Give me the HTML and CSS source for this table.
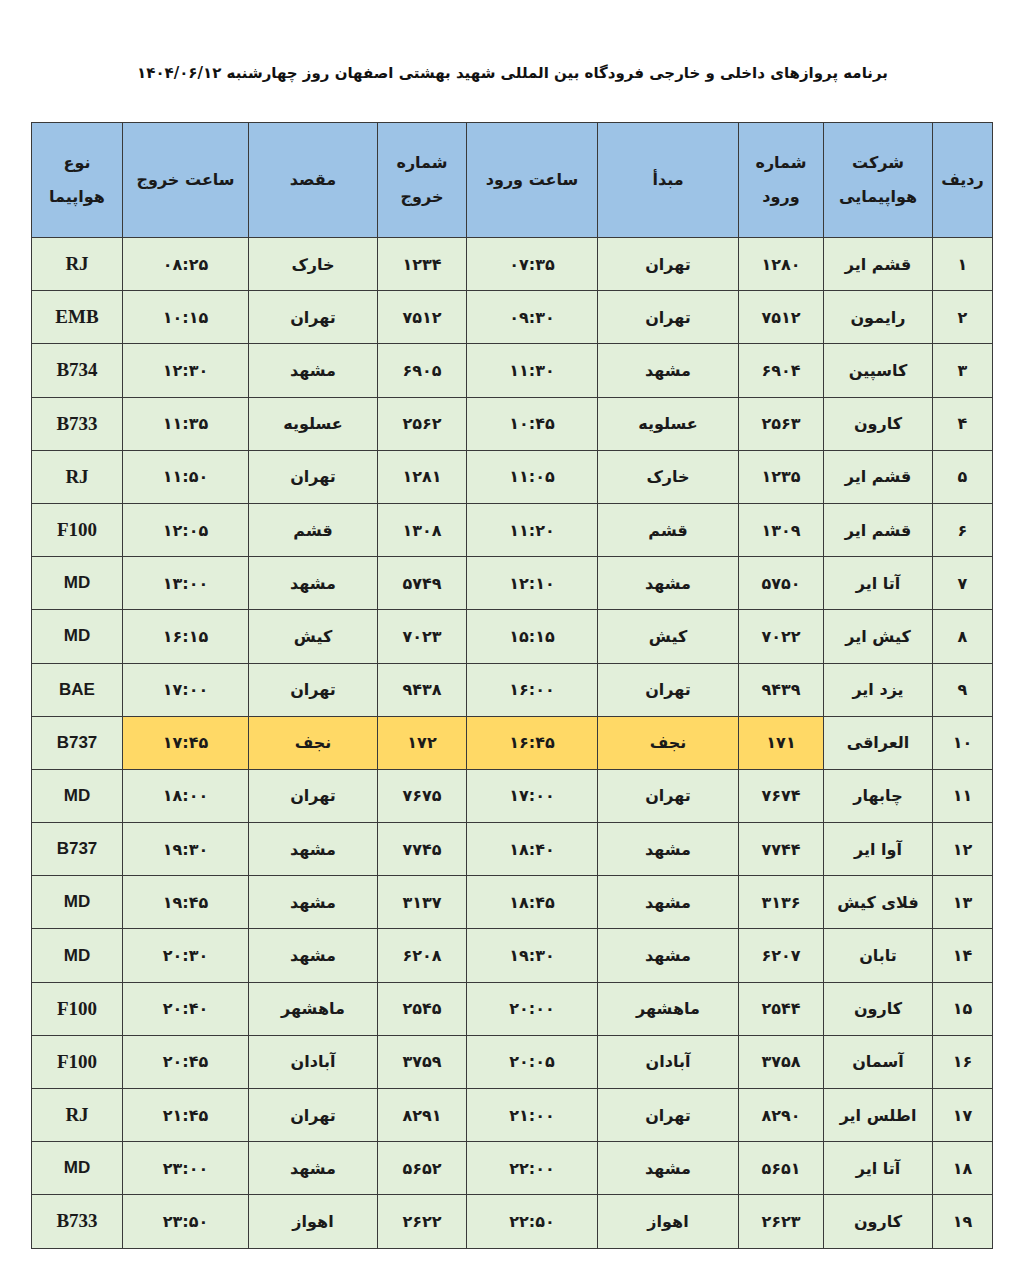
FILE: index.html
```html
<!DOCTYPE html>
<html lang="fa" dir="rtl">
<head>
<meta charset="utf-8">
<title>برنامه پروازها</title>
<link rel="stylesheet" href="styles.css">
</head>
<body>
<div class="page">
  <h1 class="title">برنامه پروازهای داخلی و خارجی فرودگاه بین المللی شهید بهشتی اصفهان روز چهارشنبه ۱۴۰۴/۰۶/۱۲</h1>
  <table class="flights">
    <colgroup>
      <col class="c-row"><col class="c-air"><col class="c-inno"><col class="c-from"><col class="c-intime"><col class="c-outno"><col class="c-to"><col class="c-outtime"><col class="c-type">
    </colgroup>
    <thead>
      <tr>
        <th>ردیف</th>
        <th>شرکت<br>هواپیمایی</th>
        <th>شماره<br>ورود</th>
        <th>مبدأ</th>
        <th>ساعت ورود</th>
        <th>شماره<br>خروج</th>
        <th>مقصد</th>
        <th>ساعت خروج</th>
        <th>نوع<br>هواپیما</th>
      </tr>
    </thead>
    <tbody>
      <tr><td>۱</td><td>قشم ایر</td><td>۱۲۸۰</td><td>تهران</td><td>۰۷:۳۵</td><td>۱۲۳۴</td><td>خارک</td><td>۰۸:۲۵</td><td class="t-serif">RJ</td></tr>
      <tr><td>۲</td><td>رایمون</td><td>۷۵۱۲</td><td>تهران</td><td>۰۹:۳۰</td><td>۷۵۱۲</td><td>تهران</td><td>۱۰:۱۵</td><td class="t-serif">EMB</td></tr>
      <tr><td>۳</td><td>کاسپین</td><td>۶۹۰۴</td><td>مشهد</td><td>۱۱:۳۰</td><td>۶۹۰۵</td><td>مشهد</td><td>۱۲:۳۰</td><td class="t-serif">B734</td></tr>
      <tr><td>۴</td><td>کارون</td><td>۲۵۶۳</td><td>عسلویه</td><td>۱۰:۴۵</td><td>۲۵۶۲</td><td>عسلویه</td><td>۱۱:۳۵</td><td class="t-serif">B733</td></tr>
      <tr><td>۵</td><td>قشم ایر</td><td>۱۲۳۵</td><td>خارک</td><td>۱۱:۰۵</td><td>۱۲۸۱</td><td>تهران</td><td>۱۱:۵۰</td><td class="t-serif">RJ</td></tr>
      <tr><td>۶</td><td>قشم ایر</td><td>۱۳۰۹</td><td>قشم</td><td>۱۱:۲۰</td><td>۱۳۰۸</td><td>قشم</td><td>۱۲:۰۵</td><td class="t-serif">F100</td></tr>
      <tr><td>۷</td><td>آتا ایر</td><td>۵۷۵۰</td><td>مشهد</td><td>۱۲:۱۰</td><td>۵۷۴۹</td><td>مشهد</td><td>۱۳:۰۰</td><td class="t-sans">MD</td></tr>
      <tr><td>۸</td><td>کیش ایر</td><td>۷۰۲۲</td><td>کیش</td><td>۱۵:۱۵</td><td>۷۰۲۳</td><td>کیش</td><td>۱۶:۱۵</td><td class="t-sans">MD</td></tr>
      <tr><td>۹</td><td>یزد ایر</td><td>۹۴۳۹</td><td>تهران</td><td>۱۶:۰۰</td><td>۹۴۳۸</td><td>تهران</td><td>۱۷:۰۰</td><td class="t-sans">BAE</td></tr>
      <tr><td>۱۰</td><td>العراقی</td><td class="hl">۱۷۱</td><td class="hl">نجف</td><td class="hl">۱۶:۴۵</td><td class="hl">۱۷۲</td><td class="hl">نجف</td><td class="hl">۱۷:۴۵</td><td class="t-sans">B737</td></tr>
      <tr><td>۱۱</td><td>چابهار</td><td>۷۶۷۴</td><td>تهران</td><td>۱۷:۰۰</td><td>۷۶۷۵</td><td>تهران</td><td>۱۸:۰۰</td><td class="t-sans">MD</td></tr>
      <tr><td>۱۲</td><td>آوا ایر</td><td>۷۷۴۴</td><td>مشهد</td><td>۱۸:۴۰</td><td>۷۷۴۵</td><td>مشهد</td><td>۱۹:۳۰</td><td class="t-sans">B737</td></tr>
      <tr><td>۱۳</td><td>فلای کیش</td><td>۳۱۳۶</td><td>مشهد</td><td>۱۸:۴۵</td><td>۳۱۳۷</td><td>مشهد</td><td>۱۹:۴۵</td><td class="t-sans">MD</td></tr>
      <tr><td>۱۴</td><td>تابان</td><td>۶۲۰۷</td><td>مشهد</td><td>۱۹:۳۰</td><td>۶۲۰۸</td><td>مشهد</td><td>۲۰:۳۰</td><td class="t-sans">MD</td></tr>
      <tr><td>۱۵</td><td>کارون</td><td>۲۵۴۴</td><td>ماهشهر</td><td>۲۰:۰۰</td><td>۲۵۴۵</td><td>ماهشهر</td><td>۲۰:۴۰</td><td class="t-serif">F100</td></tr>
      <tr><td>۱۶</td><td>آسمان</td><td>۳۷۵۸</td><td>آبادان</td><td>۲۰:۰۵</td><td>۳۷۵۹</td><td>آبادان</td><td>۲۰:۴۵</td><td class="t-serif">F100</td></tr>
      <tr><td>۱۷</td><td>اطلس ایر</td><td>۸۲۹۰</td><td>تهران</td><td>۲۱:۰۰</td><td>۸۲۹۱</td><td>تهران</td><td>۲۱:۴۵</td><td class="t-serif">RJ</td></tr>
      <tr><td>۱۸</td><td>آتا ایر</td><td>۵۶۵۱</td><td>مشهد</td><td>۲۲:۰۰</td><td>۵۶۵۲</td><td>مشهد</td><td>۲۳:۰۰</td><td class="t-sans">MD</td></tr>
      <tr><td>۱۹</td><td>کارون</td><td>۲۶۲۳</td><td>اهواز</td><td>۲۲:۵۰</td><td>۲۶۲۲</td><td>اهواز</td><td>۲۳:۵۰</td><td class="t-serif">B733</td></tr>
    </tbody>
  </table>
</div>
</body>
</html>
```

FILE: styles.css
```css
* { box-sizing: border-box; }
html, body {
  margin: 0;
  padding: 0;
  background: #ffffff;
}
body {
  font-family: "DejaVu Sans", "Noto Sans", sans-serif;
  color: #1a1a1a;
}
.page {
  width: 1017px;
  padding: 58px 24px 0 32px;
}
.title {
  margin: 0;
  height: 64px;
  text-align: center;
  font-size: 15px;
  font-weight: bold;
  line-height: 30px;
  color: #111;
}
.flights {
  border-collapse: collapse;
  width: 961px;
  table-layout: fixed;
  font-size: 16px;
}
.c-row { width: 60px; }
.c-air { width: 109px; }
.c-inno { width: 85px; }
.c-from { width: 141px; }
.c-intime { width: 131px; }
.c-outno { width: 89px; }
.c-to { width: 129px; }
.c-outtime { width: 126px; }
.c-type { width: 91px; }
.flights th,
.flights td {
  border: 1.5px solid #3a3a3a;
  text-align: center;
  vertical-align: middle;
  padding: 0 2px;
}
.flights th {
  background: #9dc3e6;
  height: 115px;
  font-size: 16px;
  font-weight: bold;
  line-height: 34px;
  color: #1a1a1a;
}
.flights td {
  background: #e2efda;
  height: 53.2px;
  font-weight: bold;
}
.flights td.hl {
  background: #ffd966;
}
.flights td.t-sans {
  font-family: "Liberation Sans", sans-serif;
  font-size: 17px;
}
.flights td.t-serif {
  font-family: "Liberation Serif", serif;
  font-size: 19px;
}
```
